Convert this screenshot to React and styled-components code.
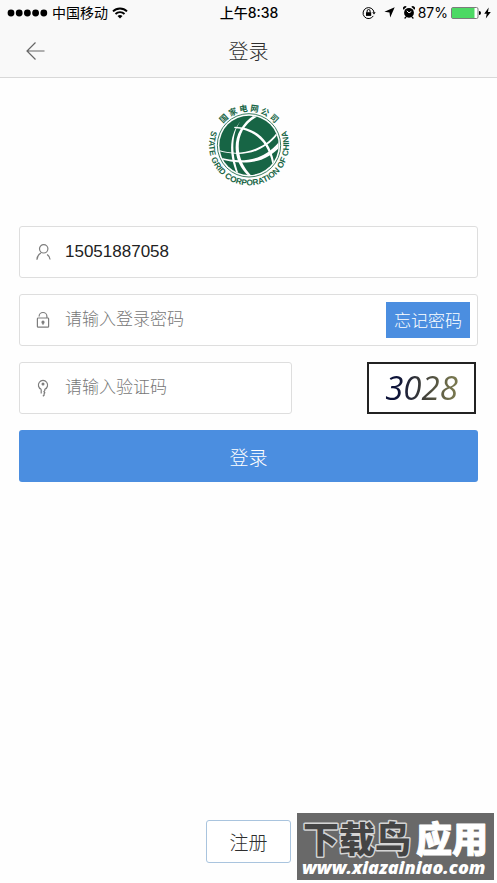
import React, { useState } from 'react';
import styled, { createGlobalStyle } from 'styled-components';

const COLORS = {
  blue: '#4b8ee0',
  border: '#dedede',
  bar: '#f9f9f9',
  text: '#2e2e2e',
  placeholder: '#777',
  icon: '#7d7d7d',
  logo: '#176545',
  battery: '#4cd964'
};

const GlobalStyle = createGlobalStyle`
  * {
    box-sizing: border-box;
  }

  body {
    margin: 0;
    background: #fefefe;
    color: ${COLORS.text};
    font-family: 'Liberation Sans', 'Noto Sans CJK SC', sans-serif;
  }

  button,
  input {
    font-family: inherit;
  }
`;

const Page = styled.div`
  display: flex;
  flex-direction: column;
  min-height: 100vh;
`;

const TopBar = styled.header`
  background: ${COLORS.bar};
  border-bottom: 1px solid #d8d8d8;
`;

const StatusBar = styled.div`
  display: grid;
  grid-template-columns: 1fr auto 1fr;
  align-items: center;
  height: 25px;
  padding: 0 6px 0 7px;
  color: #000;
  font-family: Inter, 'Noto Sans CJK SC', sans-serif;
  font-size: 14px;
  line-height: 24px;
`;

const StatusGroup = styled.div`
  display: flex;
  align-items: center;
  justify-content: ${(props) => (props.$end ? 'flex-end' : 'flex-start')};
  gap: ${(props) => props.$gap}px;
`;

const Time = styled.span`
  font-weight: 500;
`;

const NavBar = styled.div`
  display: grid;
  grid-template-columns: 1fr auto 1fr;
  align-items: center;
  height: 52px;
  padding: 0 24px;
`;

const BackButton = styled.button`
  display: flex;
  width: 24px;
  padding: 0;
  border: 0;
  background: none;
  color: #666;
`;

const Title = styled.h1`
  margin: 0;
  font-family: 'Noto Sans CJK SC', sans-serif;
  font-size: 20px;
  font-weight: 300;
  line-height: 28px;
`;

const Main = styled.main`
  display: flex;
  flex: 1;
  flex-direction: column;
  padding: 18px 19px 20px;
`;

const LogoWrapper = styled.div`
  display: flex;
  justify-content: center;
  padding-bottom: 34px;
`;

const Form = styled.form`
  display: flex;
  flex-direction: column;
  gap: 16px;
`;

const Field = styled.div`
  display: flex;
  flex: ${(props) => props.$flex || 'none'};
  align-items: center;
  gap: 12px;
  min-width: 0;
  height: 52px;
  padding: 0 7px 0 15px;
  border: 1px solid ${COLORS.border};
  border-radius: 3px;
  background: #fff;
  color: ${COLORS.icon};

  svg {
    flex: none;
  }
`;

const Input = styled.input`
  flex: 1;
  min-width: 0;
  height: 26px;
  padding: 0;
  border: 0;
  outline: 0;
  background: none;
  color: #222;
  font-size: 17px;

  &::placeholder {
    color: ${COLORS.placeholder};
    font-family: 'Noto Sans CJK SC', sans-serif;
    font-weight: 300;
    opacity: 1;
  }
`;

const ForgotButton = styled.button`
  height: 36px;
  padding: 0 8px;
  border: 0;
  background: ${COLORS.blue};
  color: #fff;
  font-family: 'Noto Sans CJK SC', sans-serif;
  font-size: 17px;
  font-weight: 300;
  line-height: 36px;
`;

const CodeRow = styled.div`
  display: flex;
  justify-content: space-between;
  gap: 75px;
  padding-right: 2px;
`;

const Captcha = styled.button`
  width: 109px;
  height: 52px;
  padding: 0;
  border: 2px solid #222;
  background: #fff;
`;

const CaptchaDigits = styled.span`
  padding: 0 4px;
  background: linear-gradient(90deg, #0c1238 20%, #3c3c38 50%, #77764e 90%);
  background-clip: text;
  color: transparent;
  font-family: 'Open Sans', sans-serif;
  font-size: 33px;
  font-style: italic;
  font-weight: 500;
  line-height: 44px;
`;

const SubmitButton = styled.button`
  height: 52px;
  border: 0;
  border-radius: 3px;
  background: ${COLORS.blue};
  color: #fff;
  font-family: 'Noto Sans CJK SC', sans-serif;
  font-size: 19px;
  font-weight: 300;
`;

const RegisterButton = styled.button`
  align-self: center;
  width: 85px;
  height: 43px;
  margin-top: auto;
  padding: 0;
  border: 1px solid #a9c4de;
  border-radius: 3px;
  background: #fff;
  color: ${COLORS.text};
  font-size: 19px;
  font-weight: 300;
`;

const Watermark = styled.div`
  position: fixed;
  right: 3px;
  bottom: 3px;
  width: 197px;
  height: 67px;
  background: #696969;
`;

const CarrierDots = () => (
  <svg width="41" height="8" viewBox="0 0 41 8">
    {[4, 12.2, 20.4, 28.6, 36.8].map((cx) => (
      <circle key={cx} cx={cx} cy="4" r="3.4" />
    ))}
  </svg>
);

const WifiIcon = () => (
  <svg width="16" height="12" viewBox="0 0 16 12" fill="none" stroke="#000" strokeWidth="1.9">
    <path d="M1 4.4a10 10 0 0 1 14 0M3.5 7a6.4 6.4 0 0 1 9 0" />
    <path d="M8 11.6 5.5 9.1a3.6 3.6 0 0 1 5 0z" fill="#000" stroke="none" />
  </svg>
);

const RotationLockIcon = () => (
  <svg width="14" height="14" viewBox="0 0 14 14" fill="none" stroke="#000">
    <path d="M11.3 9.9a5.5 5.5 0 1 1 .7-3.6" />
    <path d="M10.2 6.2h3.5L12 8.5z" fill="#000" stroke="none" />
    <path d="M4 6.2h5.2v3.7H4z" fill="#000" stroke="none" />
    <path d="M5.1 6.4V5a1.5 1.5 0 0 1 3 0v1.4" />
  </svg>
);

const LocationIcon = () => (
  <svg width="11" height="11" viewBox="0 0 11 11">
    <path d="M10.7.3 6.2 10.5 5.5 5.5.4 4.8z" />
  </svg>
);

const AlarmIcon = () => (
  <svg width="12" height="13" viewBox="0 0 12 13">
    <circle cx="6" cy="6.8" r="4.9" />
    <path d="M.4 3.7A2.2 2.2 0 0 1 3.7.8zM11.6 3.7A2.2 2.2 0 0 0 8.3.8zM2.3 10.4l-1.2 1.8 1.2.5 1.3-1.3zM9.7 10.4l1.2 1.8-1.2.5-1.3-1.3z" />
    <path d="M3.8 4.8 6 6.9l2.3-1.5" fill="none" stroke="#fff" />
  </svg>
);

const BatteryIcon = () => (
  <svg width="30" height="12" viewBox="0 0 30 12">
    <rect x=".5" y=".5" width="26.5" height="11" rx="1.5" fill="#fff" stroke="#7c7c7c" />
    <path d="M1 1h22.5v10H1z" fill={COLORS.battery} />
    <path d="M28 4a2 2 0 0 1 0 4z" />
  </svg>
);

const BoltIcon = () => (
  <svg width="7" height="12" viewBox="0 0 7 12">
    <path d="M4.7.5.2 6.8h2.5L1.8 11.5 6.8 5H4z" />
  </svg>
);

const BackIcon = () => (
  <svg width="22" height="20" viewBox="0 0 22 20" fill="none" stroke="currentColor" strokeWidth="1.2">
    <path d="M20.5 10H3M11.5 1.5 3 10l8.5 8.5" />
  </svg>
);

const UserIcon = () => (
  <svg width="18" height="18" viewBox="0 0 18 18" fill="none" stroke="currentColor" strokeWidth="1.2">
    <circle cx="8.7" cy="5.8" r="4.2" />
    <path d="M1.9 16.8c.2-3.4 1.6-5.5 4-6.9M12.1 11.4c1.7 1.1 2.8 2.8 3 5.1" />
  </svg>
);

const LockIcon = () => (
  <svg width="18" height="18" viewBox="0 0 18 18" fill="none" stroke="currentColor" strokeWidth="1.2">
    <rect x="2.4" y="7" width="11.2" height="9.2" rx=".8" />
    <path d="M4.1 5.4a3.9 3.9 0 0 1 7.8 0V7" />
    <circle cx="8" cy="11.2" r="1" fill="currentColor" />
    <path d="M8 11v2.8" />
  </svg>
);

const KeyIcon = () => (
  <svg width="18" height="18" viewBox="0 0 18 18" fill="none" stroke="currentColor" strokeWidth="1.2">
    <path d="M6.2 10.3a4.6 4.6 0 1 1 3.6 0v1.3l-.9 1.1.9 1.1-.8 1 .2 1.2-1.3 1.2M6.2 10.3v4.2" />
    <circle cx="8" cy="5" r=".9" fill="currentColor" />
  </svg>
);

const Logo = () => (
  <svg width="100" height="96" viewBox="0 0 300 288" role="img" aria-label="国家电网公司">
    <defs>
      <path id="logo-top" d="M48 148a102 102 0 0 1 204 0" />
      <path id="logo-bottom" d="M50 82A120 120 0 1 0 250 82" />
      <clipPath id="logo-disc">
        <circle cx="150" cy="148" r="89" />
      </clipPath>
    </defs>
    <circle cx="150" cy="148" r="95" fill="none" stroke={COLORS.logo} strokeWidth="2.5" />
    <circle cx="150" cy="148" r="89" fill={COLORS.logo} />
    <g clipPath="url(#logo-disc)" fill="#fff">
      <path d="M178 60C131 84 113 127 121 172c5 25 15 45 36 67h-10c-20-20-32-42-36-68-6-45 12-85 55-114z" />
      <path d="M128 72C99 103 94 168 120 236l-6-2C87 170 91 112 128 72z" />
      <path d="M57 182c43 14 92 15 129-2 24-11 41-25 58-48l-1 21c-18 18-35 30-56 38-42 15-91 8-130-4z" />
      <path d="M60 162c38 12 74 10 110-4 31-12 53-31 68-55l3 5c-15 24-38 43-69 56-36 14-76 11-112 2z" />
      <path d="M107 92c63 1 105 39 118 105l-5 6C207 138 167 101 105 96z" />
    </g>
    <g fill={COLORS.logo} fontWeight="700" textAnchor="middle">
      <text fontFamily="'Noto Sans CJK SC', sans-serif" fontSize="25">
        <textPath href="#logo-top" startOffset="50%">
          国 家 电 网 公 司
        </textPath>
      </text>
      <text fontFamily="'Liberation Sans', sans-serif" fontSize="25">
        <textPath href="#logo-bottom" startOffset="50%">
          STATE GRID CORPORATION OF CHINA
        </textPath>
      </text>
    </g>
  </svg>
);

const WatermarkArt = () => (
  <svg width="197" height="67" viewBox="0 0 197 67">
    <g
      fontFamily="'Noto Sans CJK SC', sans-serif"
      fontSize="36"
      fontWeight="900"
      strokeLinejoin="round"
      paintOrder="stroke"
    >
      <text x="6" y="40" fill="#444" stroke="#d4d4d4" strokeWidth="3">
        下载鸟
      </text>
      <text x="119" y="40" fill="#fff" stroke="#fff" strokeWidth="1">
        应用
      </text>
    </g>
    <text
      x="5"
      y="61"
      fill="#fff"
      fontFamily="'Open Sans', sans-serif"
      fontSize="18"
      fontStyle="italic"
      fontWeight="800"
    >
      www.xiazainiao.com
    </text>
  </svg>
);

const App = () => {
  const [phone, setPhone] = useState('15051887058');
  const [password, setPassword] = useState('');
  const [code, setCode] = useState('');

  const onSubmit = (event) => {
    event.preventDefault();
  };

  return (
    <Page>
      <GlobalStyle />
      <TopBar>
        <StatusBar>
          <StatusGroup $gap={4}>
            <CarrierDots />
            <span>中国移动</span>
            <WifiIcon />
          </StatusGroup>
          <Time>上午8:38</Time>
          <StatusGroup $end $gap={3}>
            <StatusGroup $end $gap={8}>
              <RotationLockIcon />
              <LocationIcon />
              <AlarmIcon />
            </StatusGroup>
            <span>87%</span>
            <BatteryIcon />
            <BoltIcon />
          </StatusGroup>
        </StatusBar>
        <NavBar>
          <BackButton type="button" aria-label="返回">
            <BackIcon />
          </BackButton>
          <Title>登录</Title>
        </NavBar>
      </TopBar>

      <Main>
        <LogoWrapper>
          <Logo />
        </LogoWrapper>

        <Form onSubmit={onSubmit}>
          <Field>
            <UserIcon />
            <Input
              type="tel"
              aria-label="手机号"
              value={phone}
              onChange={(e) => setPhone(e.target.value)}
            />
          </Field>
          <Field>
            <LockIcon />
            <Input
              type="password"
              aria-label="登录密码"
              placeholder="请输入登录密码"
              value={password}
              onChange={(e) => setPassword(e.target.value)}
            />
            <ForgotButton type="button">忘记密码</ForgotButton>
          </Field>
          <CodeRow>
            <Field $flex="1">
              <KeyIcon />
              <Input
                type="text"
                aria-label="验证码"
                placeholder="请输入验证码"
                value={code}
                onChange={(e) => setCode(e.target.value)}
              />
            </Field>
            <Captcha type="button" aria-label="3028 刷新验证码">
              <CaptchaDigits>3028</CaptchaDigits>
            </Captcha>
          </CodeRow>
          <SubmitButton type="submit">登录</SubmitButton>
        </Form>

        <RegisterButton type="button">注册</RegisterButton>
      </Main>

      <Watermark>
        <WatermarkArt />
      </Watermark>
    </Page>
  );
};

export default App;
